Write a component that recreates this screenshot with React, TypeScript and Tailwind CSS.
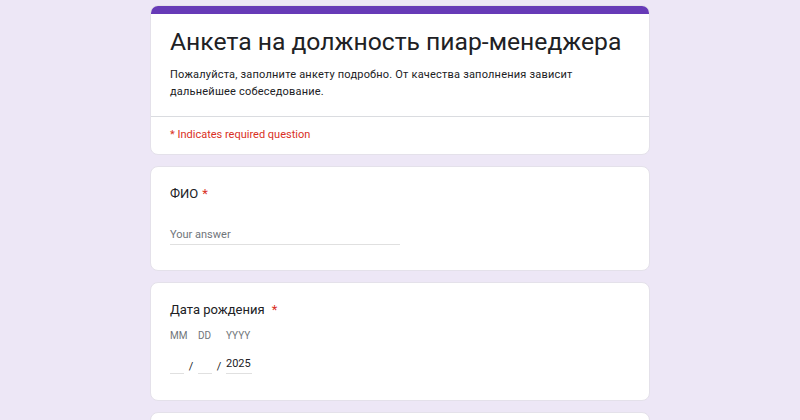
const font = { fontFamily: "Roboto, 'Noto Sans', sans-serif" };

function Card({ children, className = "" }: { children?: React.ReactNode; className?: string }) {
  return (
    <div className={`bg-white rounded-lg border border-[#e4e1ea] shrink-0 ${className}`}>{children}</div>
  );
}

function Required() {
  return <span className="text-[#d93025] ml-1">*</span>;
}

export default function App() {
  return (
    <main className="bg-[#ede7f6] flex justify-center pt-[5px] overflow-hidden h-[420px]" style={font}>
      <div className="w-[500px] flex flex-col gap-[11px]">
        {/* Header */}
        <div className="bg-white rounded-lg border border-[#e4e1ea] overflow-hidden shrink-0">
          <div className="h-[8px] bg-[#673ab7]" />
          <div className="px-[19px] pt-[12px] pb-[16px]">
            <h1 className="text-[24.7px] leading-[32px] text-[#202124] whitespace-nowrap">
              Анкета на должность пиар-менеджера
            </h1>
            <p className="mt-[8px] text-[11px] leading-[17px] tracking-[0.2px] text-[#202124]">
              Пожалуйста, заполните анкету подробно. От качества заполнения зависит
              <br />
              дальнейшее собеседование.
            </p>
          </div>
          <div className="border-t border-[#dadce0] px-[19px] pt-[10px] pb-[12px] text-[11px] leading-[15px] text-[#d93025]">
            * Indicates required question
          </div>
        </div>

        {/* ФИО */}
        <Card className="h-[105px] px-[19px] pt-[18px]">
          <div className="text-[13px] leading-[18px] text-[#202124]">
            ФИО
            <Required />
          </div>
          <div className="mt-[25px] w-[230px] border-b border-[#e0e0e0] pb-[2px] text-[11px] leading-[14px] text-[#70757a]">
            Your answer
          </div>
        </Card>

        {/* Дата рождения */}
        <Card className="h-[119px] px-[19px] pt-[18px]">
          <div className="text-[13px] leading-[18px] text-[#202124]">
            Дата рождения <Required />
          </div>
          <div className="mt-[11px] flex text-[10px] leading-[12px] text-[#70757a]">
            <span className="w-[28px]">MM</span>
            <span className="w-[28px]">DD</span>
            <span>YYYY</span>
          </div>
          <div className="mt-[15px] flex items-end text-[11px] leading-[14px] text-[#202124]">
            <span className="w-[14px] h-[16px] border-b border-[#e0e0e0]" />
            <span className="w-[14px] text-center">/</span>
            <span className="w-[14px] h-[16px] border-b border-[#e0e0e0]" />
            <span className="w-[14px] text-center">/</span>
            <span className="w-[26px] border-b border-[#e0e0e0] pb-[2px]">2025</span>
          </div>
        </Card>

        <Card className="h-[40px]" />
      </div>
    </main>
  );
}
